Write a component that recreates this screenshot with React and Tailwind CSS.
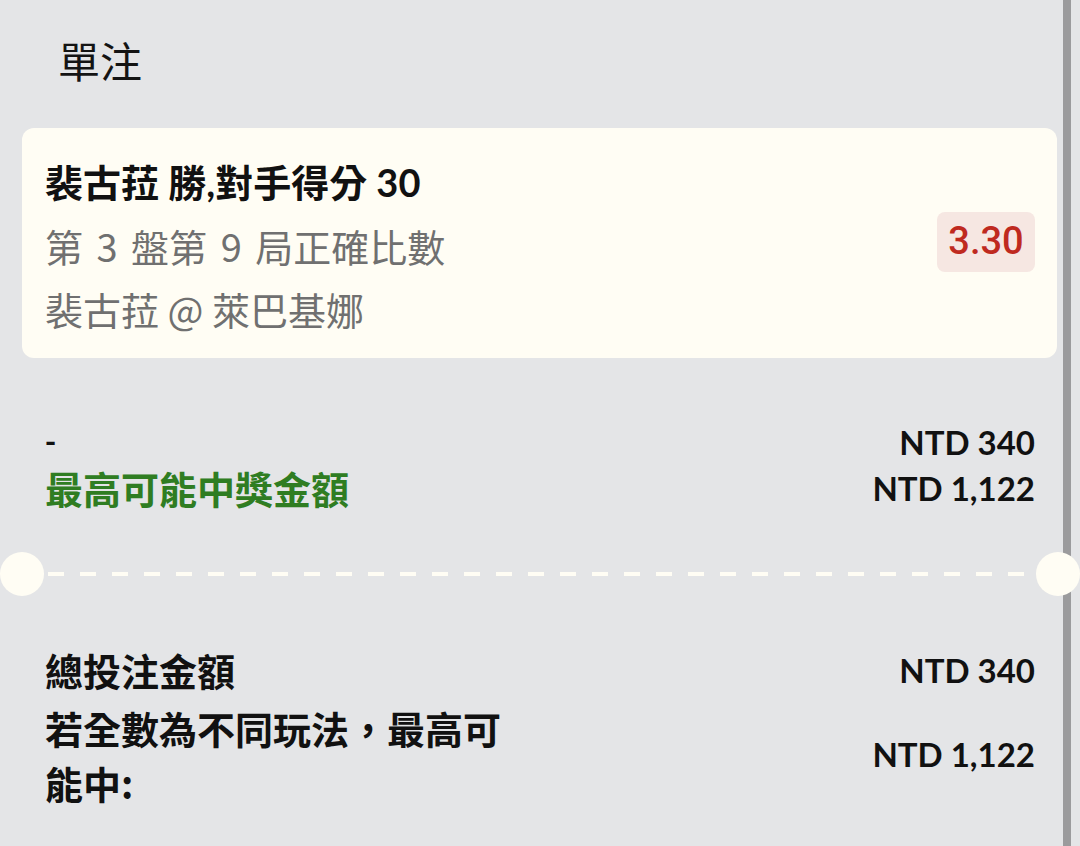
import React from 'react';

const cjk = { fontFamily: "'Noto Sans CJK TC', 'Noto Sans', sans-serif" };
const latin = { fontFamily: "Lato, 'Noto Sans CJK TC', sans-serif" };

const Amount = ({ children, className = '' }) => (
	<div className={`font-bold text-[33px] text-[#111] whitespace-nowrap text-right ${className}`} style={latin}>{children}</div>
);

const App = () => {
	return (
		<div className="w-[1080px] h-[846px] overflow-hidden bg-[#e4e5e7] flex" style={cjk}>
			<div className="relative w-[1063px] shrink-0">
				<div className="pl-[58px] pt-[28px] h-[128px] text-[42px] leading-[64px] text-[#141414]">單注</div>

				<div className="ml-[22px] mr-[6px] rounded-[12px] bg-[#fffdf4] pl-[23px] pr-[22px] pt-[23px] pb-[18px] flex items-center justify-between">
					<div className="flex flex-col text-[38px] leading-[63px]">
						<span className="font-bold text-[#111]" style={latin}>裴古菈 勝,對手得分 30</span>
						<span className="text-[#707070] [word-spacing:5px]">第 3 盤第 9 局正確比數</span>
						<span className="text-[#707070]">裴古菈 @ 萊巴基娜</span>
					</div>
					<div className="w-[98px] h-[60px] mt-[-8px] rounded-[8px] bg-[#f6e7e2] flex items-center justify-center text-[38px] font-medium text-[#bf2a1f]" style={{ fontFamily: "Roboto, sans-serif" }}>3.30</div>
				</div>

				<div className="mt-[61px] pl-[45px] pr-[28px] grid grid-cols-[1fr_auto] grid-rows-[46px_46px]">
					<div className="h-[46px] leading-[40px] font-bold text-[#111] text-[30px]">-</div>
					<Amount className="h-[46px] leading-[46px]">NTD 340</Amount>
					<div className="h-[46px] leading-[46px] font-bold text-[38px] text-[#2f7d22]">最高可能中獎金額</div>
					<Amount className="h-[46px] leading-[46px]">NTD 1,122</Amount>
				</div>

				<div className="relative h-[44px] mt-[41px] flex items-center pl-[48px] pr-[28px]">
					<div className="flex-1 h-[4px] bg-[repeating-linear-gradient(to_right,#fffdf4_0px,#fffdf4_16px,transparent_16px,transparent_32px)]" />
					<div className="absolute left-0 top-0 w-[44px] h-[44px] rounded-full bg-[#fffdf4]" />
					<div className="absolute left-[1036px] top-0 w-[44px] h-[44px] rounded-full bg-[#fffdf4] z-10" />
				</div>

				<div className="mt-[46px] pl-[45px] pr-[28px] flex flex-col">
					<div className="flex items-center justify-between h-[56px]">
						<span className="font-bold text-[38px] leading-[56px] text-[#111]">總投注金額</span>
						<Amount className="leading-[56px]">NTD 340</Amount>
					</div>
					<div className="flex items-center justify-between mt-[2px]">
						<span className="w-[475px] font-bold text-[38px] leading-[55px] text-[#111]">若全數為不同玩法，最高可能中:</span>
						<Amount>NTD 1,122</Amount>
					</div>
				</div>
			</div>
			<div className="w-[8px] shrink-0 bg-[#9b9b9d]" />
			<div className="flex-1" />
		</div>
	);
};

export default App;
